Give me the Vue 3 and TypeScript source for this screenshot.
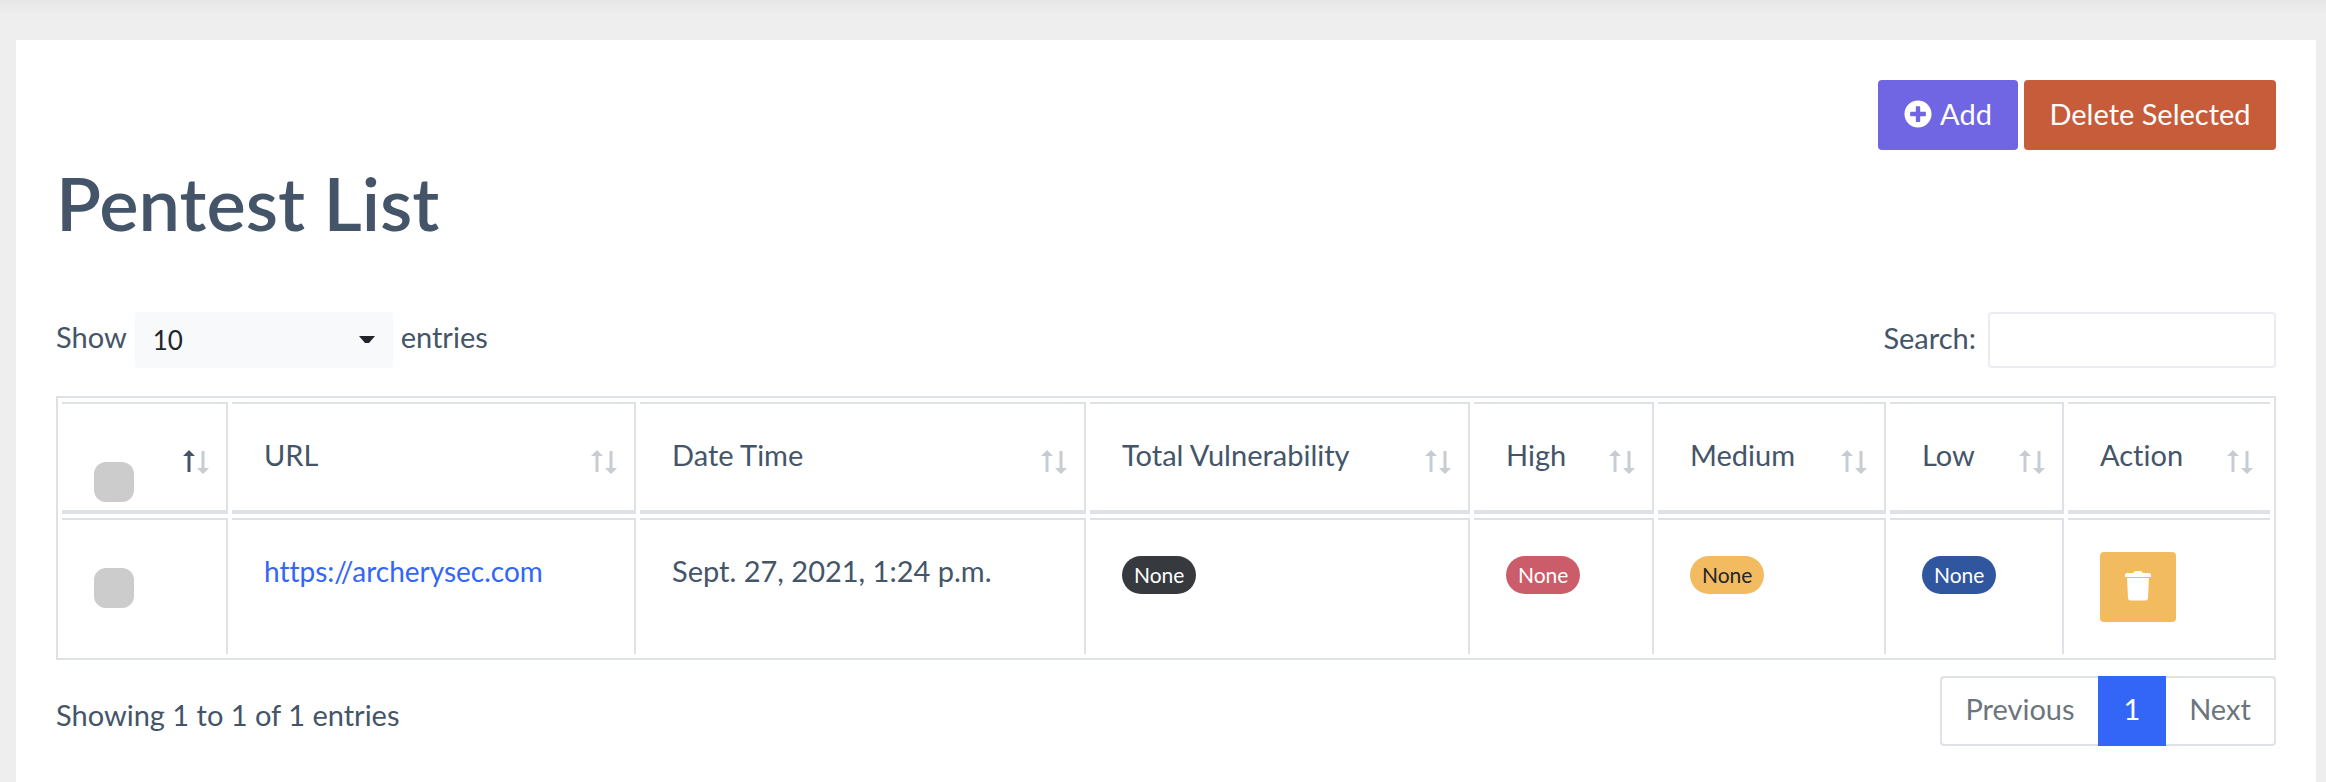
<script setup lang="ts">
import { ref } from 'vue'

interface Column {
  label: string
  width: number
}

interface Pentest {
  url: string
  date: string
  total: string
  high: string
  medium: string
  low: string
}

const columns: Column[] = [
  { label: 'URL', width: 404 },
  { label: 'Date Time', width: 446 },
  { label: 'Total Vulnerability', width: 380 },
  { label: 'High', width: 180 },
  { label: 'Medium', width: 228 },
  { label: 'Low', width: 174 },
  { label: 'Action', width: 202 },
]

const rows: Pentest[] = [
  {
    url: 'https://archerysec.com',
    date: 'Sept. 27, 2021, 1:24 p.m.',
    total: 'None',
    high: 'None',
    medium: 'None',
    low: 'None',
  },
]

const pageSize = ref('10')
const search = ref('')
</script>

<template>
  <main class="page">
    <section class="card">
      <div class="actions">
        <button type="button" class="btn btn-add">
          <svg class="icon-plus" viewBox="0 0 512 512" aria-hidden="true">
            <path
              fill="currentColor"
              d="M256 8C119 8 8 119 8 256s111 248 248 248 248-111 248-248S393 8 256 8zm144 276c0 6.6-5.4 12-12 12h-92v92c0 6.6-5.4 12-12 12h-56c-6.6 0-12-5.4-12-12v-92h-92c-6.6 0-12-5.4-12-12v-56c0-6.6 5.4-12 12-12h92v-92c0-6.6 5.4-12 12-12h56c6.6 0 12 5.4 12 12v92h92c6.6 0 12 5.4 12 12v56z"
            />
          </svg>
          Add
        </button>
        <button type="button" class="btn btn-delete">Delete Selected</button>
      </div>

      <h1 class="title">Pentest List</h1>

      <div class="controls">
        <label class="length">
          <span>Show</span>
          <span class="select-wrap">
            <select v-model="pageSize" class="select">
              <option>10</option>
              <option>25</option>
              <option>50</option>
              <option>100</option>
            </select>
            <svg class="caret" viewBox="0 0 16 8" aria-hidden="true">
              <path d="M0 0h16L10 7H6z" fill="#212529" />
            </svg>
          </span>
          <span>entries</span>
        </label>
        <label class="search">
          <span>Search:</span>
          <input v-model="search" type="search" class="search-input" />
        </label>
      </div>

      <table class="table">
        <colgroup>
          <col class="col-check" />
          <col v-for="c in columns" :key="c.label" :style="{ width: c.width + 'px' }" />
        </colgroup>
        <thead>
          <tr>
            <th class="check-head" scope="col">
              <div class="head-row">
                <input type="checkbox" class="check" aria-label="Select all" />
                <button type="button" class="sort sort-asc" aria-label="Sort by selection">
                  <svg class="arrows" viewBox="0 0 26 24" aria-hidden="true">
                    <path class="up" d="M6 0l6 6H7.500v16h-3V6H0z" />
                    <path class="down" d="M20 24l-6-6h4.500V1h3v17H26z" />
                  </svg>
                </button>
              </div>
            </th>
            <th v-for="c in columns" :key="c.label" scope="col">
              <button type="button" class="sort">
                {{ c.label }}
                <svg class="arrows" viewBox="0 0 26 24" aria-hidden="true">
                  <path class="up" d="M6 0l6 6H7.500v16h-3V6H0z" />
                  <path class="down" d="M20 24l-6-6h4.500V1h3v17H26z" />
                </svg>
              </button>
            </th>
          </tr>
        </thead>
        <tbody>
          <tr v-for="r in rows" :key="r.url">
            <td class="check-cell">
              <input type="checkbox" class="check" :aria-label="'Select ' + r.url" />
            </td>
            <td><a class="link" href="#">{{ r.url }}</a></td>
            <td>{{ r.date }}</td>
            <td><span class="badge dark">{{ r.total }}</span></td>
            <td><span class="badge high">{{ r.high }}</span></td>
            <td><span class="badge medium">{{ r.medium }}</span></td>
            <td><span class="badge low">{{ r.low }}</span></td>
            <td>
              <button type="button" class="btn-trash" aria-label="Delete">
                <svg class="icon-trash" viewBox="0 0 26 30" aria-hidden="true">
                  <path
                    fill="currentColor"
                    d="M2 2h6l1-1q.5-1 1.500-1h5q1 0 1.500 1l1 1h6q2 0 2 2v2H0V4q0-2 2-2zM2 7h22l-1 20q-.2 2.500-2.500 2.500h-15Q3.200 29.500 3 27z"
                  />
                </svg>
              </button>
            </td>
          </tr>
        </tbody>
      </table>

      <footer class="footer">
        <p class="info">Showing 1 to 1 of 1 entries</p>
        <nav class="pager" aria-label="Table pages">
          <a href="#" class="page-link prev">Previous</a>
          <a href="#" class="page-link active" aria-current="page">1</a>
          <a href="#" class="page-link next">Next</a>
        </nav>
      </footer>
    </section>
  </main>
</template>

<style>
body {
  background: #eee;
}
</style>

<style scoped>
* {
  box-sizing: border-box;
}
.page {
  min-height: 100vh;
  padding: 40px 10px 0 16px;
  background: linear-gradient(#e6e6e6, #eee 16px);
  color: #445569;
  font-family: Lato, 'Liberation Sans', sans-serif;
  font-size: 29px;
  font-variant-ligatures: none;
  line-height: 38px;
}
button,
input,
select {
  color: inherit;
  font: inherit;
}
.card {
  min-height: calc(100vh - 40px);
  padding: 40px;
  background: #fff;
}
.actions {
  display: flex;
  justify-content: flex-end;
  gap: 6px;
}
.btn {
  display: flex;
  align-items: center;
  justify-content: center;
  gap: 8px;
  height: 70px;
  padding: 0 0 3px;
  border: 0;
  border-radius: 4px;
  color: #fff;
}
.btn-add {
  width: 140px;
  background: #7066e4;
}
.btn-delete {
  width: 252px;
  background: #c75c3a;
}
.icon-plus {
  width: 28px;
  height: 28px;
}
.title {
  margin: 10px 0 66px;
  font-size: 74px;
  font-weight: 600;
  line-height: 86px;
}
.controls {
  display: flex;
  justify-content: space-between;
  margin-bottom: 28px;
}
.length,
.search {
  display: flex;
  align-items: flex-start;
}
.length {
  gap: 8px;
  line-height: 50px;
}
.search {
  gap: 12px;
  line-height: 52px;
}
.select-wrap {
  position: relative;
  width: 258px;
}
.select {
  display: block;
  width: 100%;
  height: 56px;
  padding: 0 18px;
  border: 0;
  border-radius: 4px;
  background: #f8f9fb;
  color: #212529;
  font-size: 26px;
  appearance: none;
}
.caret {
  position: absolute;
  top: 24px;
  right: 18px;
  width: 16px;
  height: 8px;
  pointer-events: none;
}
.search-input {
  width: 288px;
  height: 56px;
  padding: 0 16px;
  border: 2px solid #ebebf2;
  border-radius: 4px;
  background: #fff;
}
.table {
  width: 100%;
  table-layout: fixed;
  border: 2px solid #dee2e6;
  border-collapse: separate;
  border-spacing: 4px;
}
.col-check {
  width: 166px;
}
th,
td {
  padding: 32px;
  border-top: 2px solid #dee2e6;
  border-right: 2px solid #dee2e6;
  font-weight: 400;
  text-align: left;
  vertical-align: top;
}
th {
  padding-right: 17px;
  border-bottom: 4px solid #dee2e6;
}
th:last-child,
td:last-child {
  border-right: 0;
}
.check-head {
  padding-bottom: 8px;
}
.head-row {
  display: flex;
  align-items: flex-start;
  justify-content: space-between;
}
.check {
  display: block;
  width: 40px;
  height: 40px;
  margin: 26px 0 0;
  border-radius: 12px;
  background: #ccc;
  appearance: none;
}
.check-cell .check {
  margin-top: 16px;
}
.sort {
  display: flex;
  align-items: flex-start;
  justify-content: space-between;
  width: 100%;
  padding: 0;
  border: 0;
  background: none;
  text-align: left;
}
.head-row .sort {
  width: auto;
}
.arrows {
  width: 26px;
  height: 24px;
  margin-top: 14px;
  fill: #c7ccd2;
}
.sort-asc .up {
  fill: #445569;
}
.link {
  color: #3366f7;
  font-size: 28px;
  text-decoration: none;
}
.badge {
  display: block;
  width: fit-content;
  margin-top: 4px;
  padding: 0 12px;
  border-radius: 20px;
  color: #fff;
  font-size: 21px;
  line-height: 38px;
}
.dark {
  background: #363a3e;
}
.high {
  background: #ca5d69;
}
.medium {
  background: #f3bb5f;
  color: #212529;
}
.low {
  background: #2f569f;
}
.btn-trash {
  display: flex;
  align-items: center;
  justify-content: center;
  width: 76px;
  height: 70px;
  padding: 0 0 3px;
  border: 0;
  border-radius: 4px;
  background: #f3bb5f;
  color: #fff;
}
.icon-trash {
  width: 26px;
  height: 30px;
}
.footer {
  display: flex;
  justify-content: space-between;
  margin-top: 16px;
}
.info {
  margin: 20px 0 0;
}
.pager {
  display: flex;
  height: 70px;
  line-height: 62px;
}
.page-link {
  border: 2px solid #dee2e6;
  color: #6c757d;
  text-align: center;
  text-decoration: none;
}
.prev {
  width: 158px;
  border-right: 0;
  border-radius: 4px 0 0 4px;
}
.active {
  width: 68px;
  border-color: #3366f7;
  background: #3366f7;
  color: #fff;
}
.next {
  width: 110px;
  border-left: 0;
  border-radius: 0 4px 4px 0;
}
</style>
